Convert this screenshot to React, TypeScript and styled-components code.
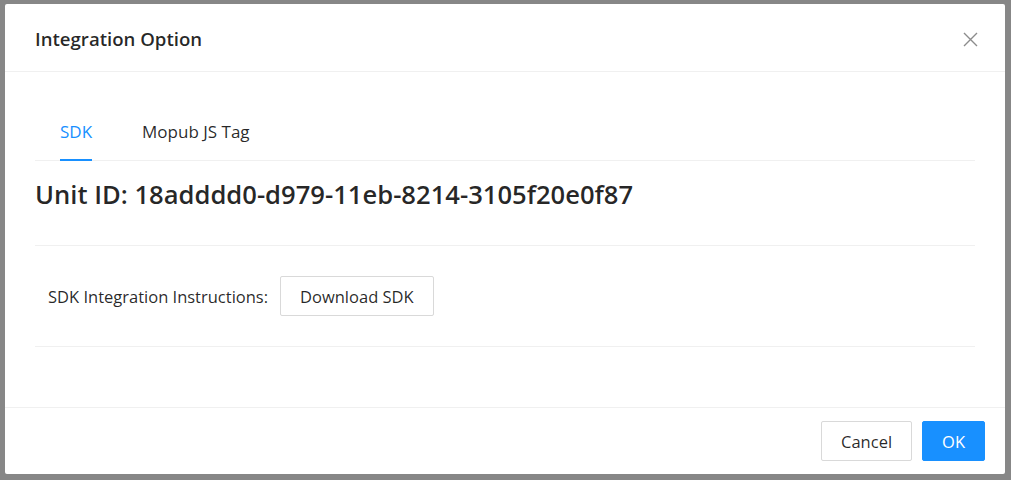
import React from "react";
import styled, { createGlobalStyle } from "styled-components";

const GlobalStyle = createGlobalStyle`
  html, body {
    margin: 0;
    padding: 0;
    background: #878787;
  }
  body {
    font-family: "Segoe UI", "Open Sans", "Noto Sans", Arial, sans-serif;
    color: rgba(0, 0, 0, 0.85);
  }
  * { box-sizing: border-box; }
`;

const Page = styled.div`
  height: 480px;
  padding: 4px 6px 6px 5px;
`;

const Modal = styled.div`
  width: 1000px;
  height: 470px;
  background: #fff;
  border-radius: 2px;
  display: flex;
  flex-direction: column;
  overflow: hidden;
`;

const Header = styled.div`
  height: 68px;
  flex: none;
  display: flex;
  align-items: center;
  justify-content: space-between;
  padding: 3px 27px 0 30px;
  border-bottom: 1px solid #f0f0f0;
`;

const Title = styled.div`
  font-size: 18.6px;
  font-weight: 600;
  line-height: 24px;
  color: rgba(0, 0, 0, 0.85);
`;

const CloseButton = styled.button`
  border: 0;
  background: transparent;
  padding: 0;
  width: 16px;
  height: 16px;
  display: flex;
  align-items: center;
  justify-content: center;
  cursor: pointer;
  color: #8c8c8c;
`;

const Body = styled.div`
  flex: 1;
  padding: 0 30px;
`;

const TabNav = styled.div`
  height: 89px;
  display: flex;
  align-items: flex-end;
  gap: 50px;
  padding-left: 25px;
  border-bottom: 1px solid #f0f0f0;
`;

const Tab = styled.div<{ $active?: boolean }>`
  position: relative;
  font-size: 17px;
  line-height: 24px;
  padding-bottom: 16px;
  color: ${(p) => (p.$active ? "#1890ff" : "rgba(0,0,0,0.85)")};
  cursor: pointer;
  &::after {
    content: "";
    position: absolute;
    left: 0;
    right: 0;
    bottom: -1px;
    height: 2px;
    background: ${(p) => (p.$active ? "#1890ff" : "transparent")};
  }
`;

const UnitId = styled.h2`
  margin: 0;
  padding: 18px 0 34px;
  font-size: 25.6px;
  font-weight: 600;
  line-height: 32px;
  color: rgba(0, 0, 0, 0.85);
  border-bottom: 1px solid #f0f0f0;
`;

const Row = styled.div`
  display: flex;
  align-items: center;
  gap: 12px;
  padding: 30px 0 30px 13px;
  border-bottom: 1px solid #f0f0f0;
`;

const Label = styled.span`
  font-size: 16.5px;
  line-height: 24px;
  padding-top: 1px;
  color: rgba(0, 0, 0, 0.85);
`;

const Button = styled.button<{ $primary?: boolean }>`
  height: 40px;
  padding: 1px 19px 0;
  font-family: inherit;
  font-size: 16.5px;
  line-height: 24px;
  border-radius: 2px;
  border: 1px solid ${(p) => (p.$primary ? "#1890ff" : "#d9d9d9")};
  background: ${(p) => (p.$primary ? "#1890ff" : "#fff")};
  color: ${(p) => (p.$primary ? "#fff" : "rgba(0,0,0,0.85)")};
  cursor: pointer;
`;

const Footer = styled.div`
  height: 67px;
  flex: none;
  display: flex;
  justify-content: flex-end;
  align-items: center;
  gap: 10px;
  padding: 0 20px;
  border-top: 1px solid #f0f0f0;
`;

export default function App() {
  return (
    <>
      <GlobalStyle />
      <Page>
        <Modal>
          <Header>
            <Title>Integration Option</Title>
            <CloseButton aria-label="Close">
              <svg width="15" height="15" viewBox="0 0 15 15" fill="none">
                <path d="M1 1 L14 14 M14 1 L1 14" stroke="currentColor" strokeWidth="1.4" />
              </svg>
            </CloseButton>
          </Header>
          <Body>
            <TabNav>
              <Tab $active>SDK</Tab>
              <Tab>Mopub JS Tag</Tab>
            </TabNav>
            <UnitId>Unit ID: 18adddd0-d979-11eb-8214-3105f20e0f87</UnitId>
            <Row>
              <Label>SDK Integration Instructions:</Label>
              <Button>Download SDK</Button>
            </Row>
          </Body>
          <Footer>
            <Button>Cancel</Button>
            <Button $primary>OK</Button>
          </Footer>
        </Modal>
      </Page>
    </>
  );
}
